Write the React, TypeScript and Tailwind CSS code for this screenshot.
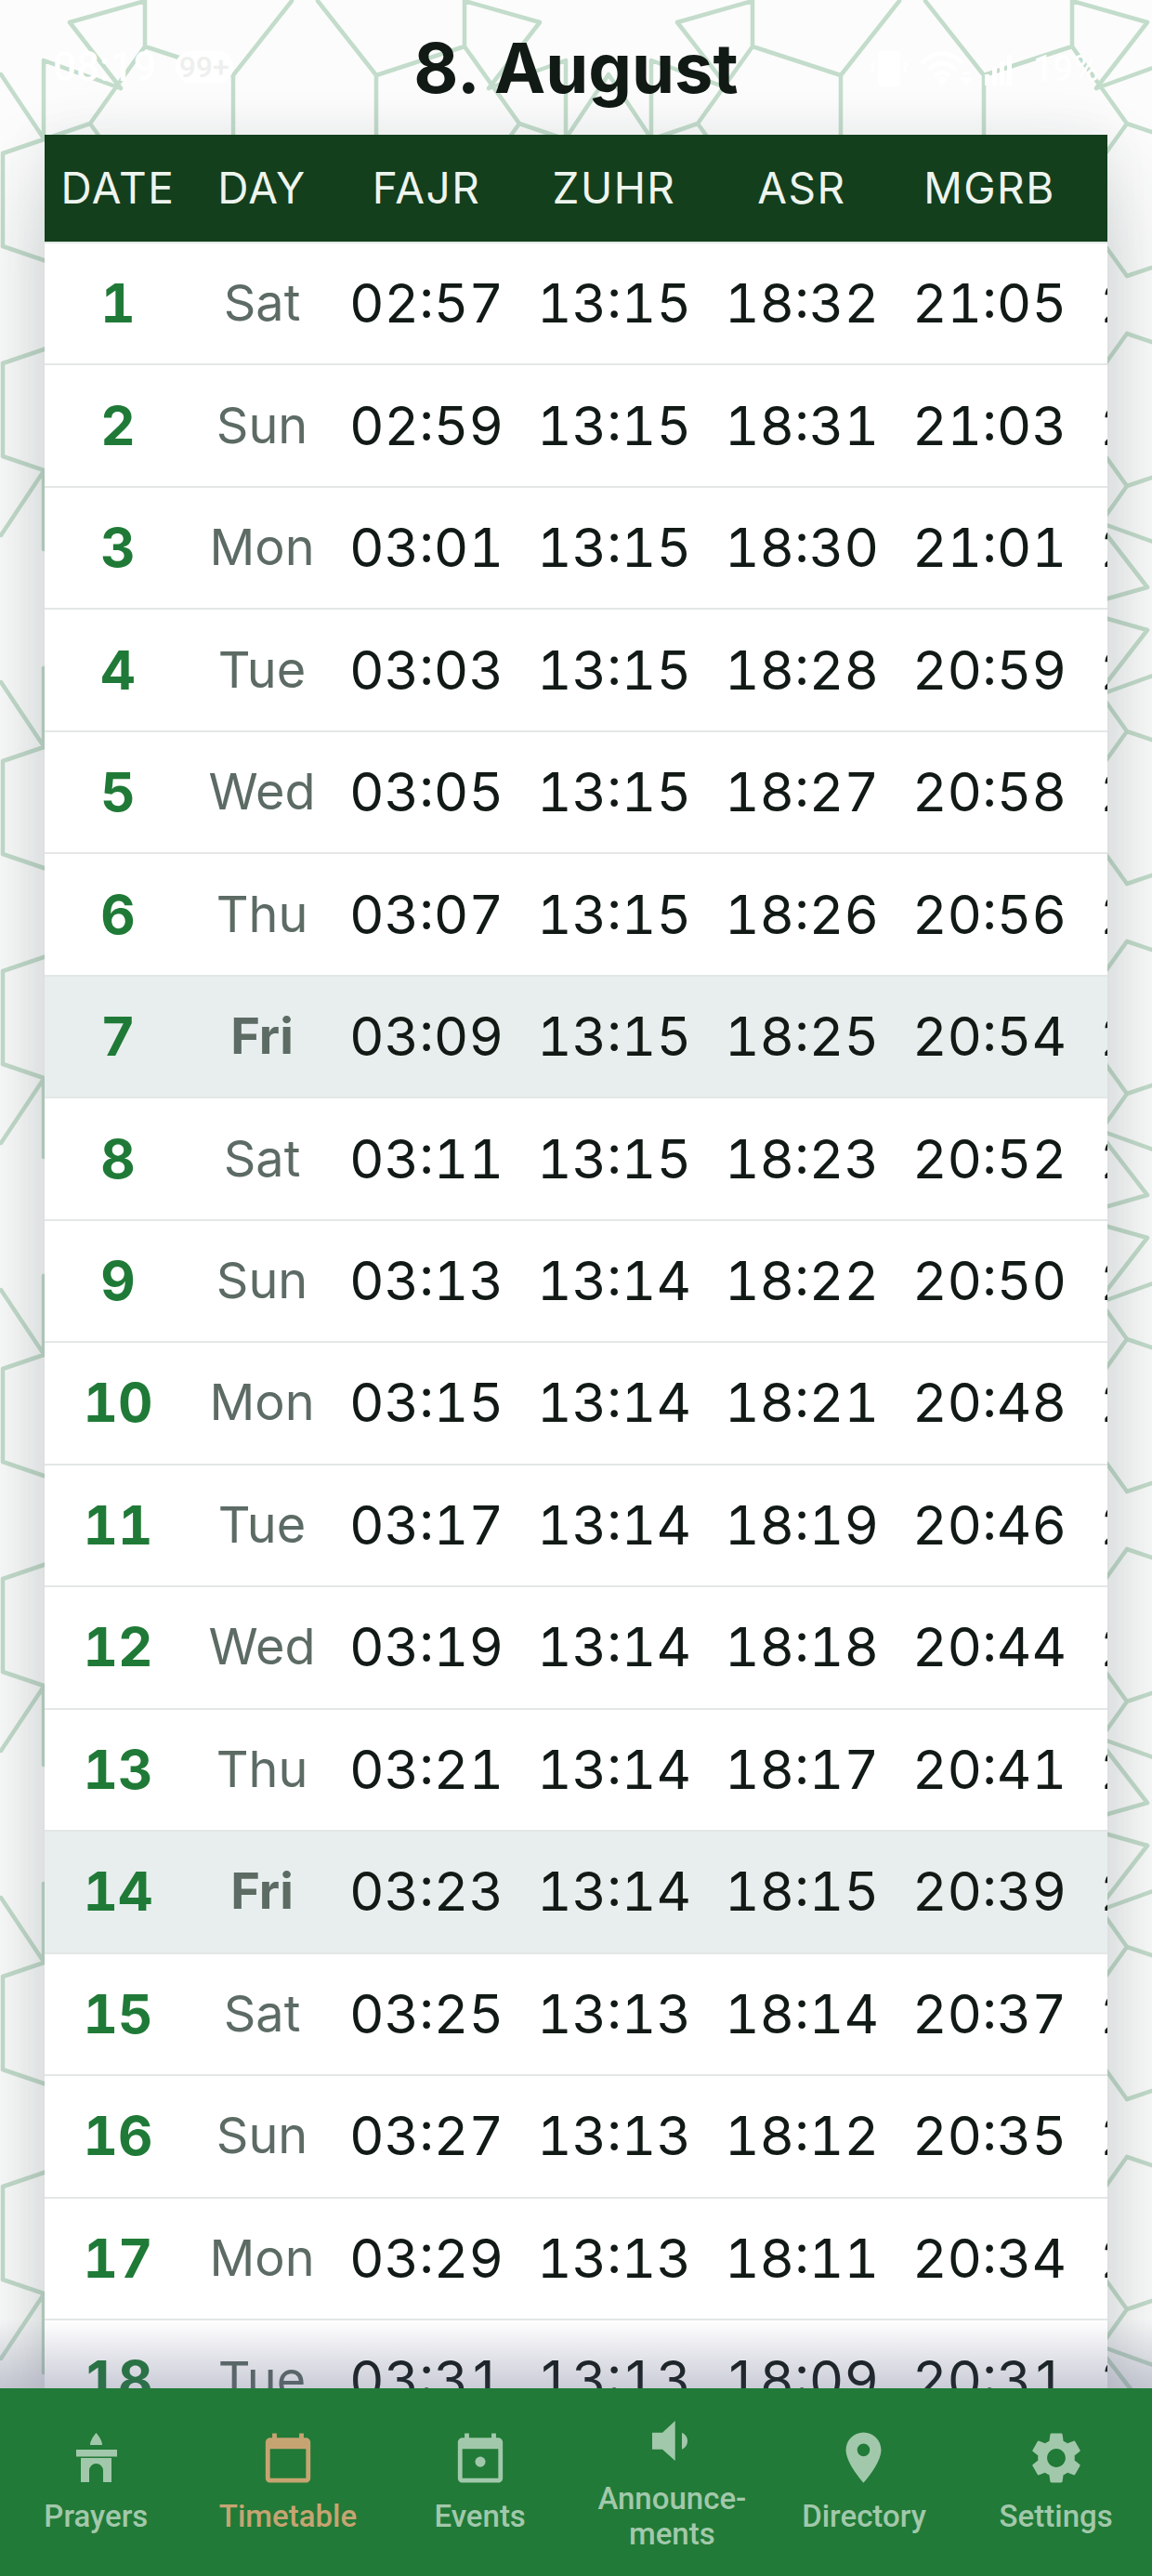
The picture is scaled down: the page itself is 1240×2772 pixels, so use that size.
import React from "react";

const rows: [number, string, string, string, string, string, string][] = [
  [1, "Sat", "02:57", "13:15", "18:32", "21:05", "22:48"],
  [2, "Sun", "02:59", "13:15", "18:31", "21:03", "22:46"],
  [3, "Mon", "03:01", "13:15", "18:30", "21:01", "22:44"],
  [4, "Tue", "03:03", "13:15", "18:28", "20:59", "22:42"],
  [5, "Wed", "03:05", "13:15", "18:27", "20:58", "22:40"],
  [6, "Thu", "03:07", "13:15", "18:26", "20:56", "22:38"],
  [7, "Fri", "03:09", "13:15", "18:25", "20:54", "22:36"],
  [8, "Sat", "03:11", "13:15", "18:23", "20:52", "22:34"],
  [9, "Sun", "03:13", "13:14", "18:22", "20:50", "22:32"],
  [10, "Mon", "03:15", "13:14", "18:21", "20:48", "22:30"],
  [11, "Tue", "03:17", "13:14", "18:19", "20:46", "22:28"],
  [12, "Wed", "03:19", "13:14", "18:18", "20:44", "22:26"],
  [13, "Thu", "03:21", "13:14", "18:17", "20:41", "22:24"],
  [14, "Fri", "03:23", "13:14", "18:15", "20:39", "22:22"],
  [15, "Sat", "03:25", "13:13", "18:14", "20:37", "22:20"],
  [16, "Sun", "03:27", "13:13", "18:12", "20:35", "22:18"],
  [17, "Mon", "03:29", "13:13", "18:11", "20:34", "22:16"],
  [18, "Tue", "03:31", "13:13", "18:09", "20:31", "22:14"],
];

// One quadrant of the geometric wallpaper; mirrored and repeated below.
const quadrant: number[][] = [
  [156, 1, 156, 50],
  [156, 50, 251, 81],
  [251, 81, 251, 170],
  [251, 81, 314, 1],
  [75, 24, 156, 1],
  [75, 24, 130, 95],
  [47, 65, 130, 95],
  [47, 65, 47, 149],
  [1, 80, 47, 149],
  [156, 50, 97, 133],
  [97, 133, 3, 165],
  [97, 133, 125, 172],
  [3, 165, 3, 265],
  [3, 265, 97, 297],
  [97, 297, 125, 258],
];

function wallpaperPath() {
  const out: string[] = [];
  for (let tx = 0; tx < 3; tx++) {
    for (let ty = 0; ty < 5; ty++) {
      for (const mx of [0, 1]) {
        for (const my of [0, 1]) {
          for (const [a, b, c, d] of quadrant) {
            const fx = (v: number) => (mx ? 656 - v : v) + tx * 654;
            const fy = (v: number) => (my ? 656 - v : v) + ty * 654;
            out.push(`M${fx(a)} ${fy(b)}L${fx(c)} ${fy(d)}`);
          }
        }
      }
    }
  }
  return out.join("");
}

const INACTIVE = "#a2c8ab";
const ACTIVE = "#c6a472";

const CAL =
  "M20 3h-1V1h-2v2H7V1H5v2H4c-1.1 0-2 .9-2 2v16c0 1.1.9 2 2 2h16c1.1 0 2-.9 2-2V5c0-1.1-.9-2-2-2zm0 18H4V8h16v13z";

function PrayersIcon() {
  return (
    <svg width="58" height="58" viewBox="0 0 58 58" fill={INACTIVE}>
      <path d="M23 15c0-4 3-9 6.500-13 3.500 4 6.500 9 6.500 13z" />
      <rect x="8" y="20" width="44" height="7.500" />
      <path fillRule="evenodd" d="M13 29h33v26h-9V42.500a7.500 7.500 0 0 0-15 0V55h-9z" />
    </svg>
  );
}

function CalendarIcon({ color }: { color: string }) {
  return (
    <svg width="58" height="58" viewBox="0 0 24 24" fill={color}>
      <path d={CAL} />
    </svg>
  );
}

function EventIcon() {
  return (
    <svg width="58" height="58" viewBox="0 0 24 24" fill={INACTIVE}>
      <path d={CAL} />
      <circle cx="12" cy="13.700" r="2.300" />
    </svg>
  );
}

function SpeakerIcon() {
  return (
    <svg width="58" height="58" viewBox="0 0 58 58" fill={INACTIVE}>
      <path d="M8 20.700h11L32.700 8v43L19 38.700H8z" />
      <path d="M40 20.700c3.500 1.500 6 5 6 9s-2.500 7.500-6 9z" />
    </svg>
  );
}

function PinIcon() {
  return (
    <svg width="65" height="65" viewBox="0 0 24 24" fill={INACTIVE} className="shrink-0">
      <path d="M12 2C8.130 2 5 5.130 5 9c0 5.250 7 13 7 13s7-7.750 7-13c0-3.870-3.130-7-7-7zm0 9.500a2.500 2.500 0 0 1 0-5 2.500 2.500 0 0 1 0 5z" />
    </svg>
  );
}

function GearIcon() {
  return (
    <svg width="66" height="66" viewBox="0 0 24 24" fill={INACTIVE} className="shrink-0">
      <path d="M19.140 12.940c.04-.3.06-.61.06-.94 0-.32-.02-.64-.07-.94l2.030-1.580c.18-.14.23-.41.12-.61l-1.920-3.320c-.12-.22-.37-.29-.59-.22l-2.390.96c-.5-.38-1.030-.7-1.620-.94L14.400 2.810c-.04-.24-.24-.41-.48-.41h-3.840c-.24 0-.43.17-.47.41L9.250 5.350c-.59.24-1.130.57-1.620.94l-2.390-.96c-.22-.08-.47 0-.59.22L2.740 8.870c-.12.21-.08.47.12.61l2.030 1.580c-.05.3-.09.63-.09.94s.02.64.07.94l-2.030 1.580c-.18.14-.23.41-.12.61l1.920 3.320c.12.22.37.29.59.22l2.390-.96c.5.38 1.030.7 1.620.94l.36 2.540c.05.24.24.41.48.41h3.840c.24 0 .44-.17.47-.41l.36-2.540c.59-.24 1.130-.56 1.620-.94l2.390.96c.22.08.47 0 .59-.22l1.920-3.320c.12-.22.07-.47-.12-.61l-2.010-1.580zM12 15.600c-1.980 0-3.600-1.620-3.600-3.600s1.620-3.600 3.600-3.600 3.600 1.620 3.600 3.600-1.620 3.600-3.600 3.600z" />
    </svg>
  );
}

const navItems: { icon: React.ReactNode; label: string[]; active?: boolean }[] = [
  { icon: <PrayersIcon />, label: ["Prayers"] },
  { icon: <CalendarIcon color={ACTIVE} />, label: ["Timetable"], active: true },
  { icon: <EventIcon />, label: ["Events"] },
  { icon: <SpeakerIcon />, label: ["Announce-", "ments"] },
  { icon: <PinIcon />, label: ["Directory"] },
  { icon: <GearIcon />, label: ["Settings"] },
];

function StatusBar() {
  return (
    <div className="absolute left-0 top-0 z-10 h-[145px] w-full text-white">
      <div className="absolute left-[57px] top-[46px] flex items-center gap-[20px] font-['Roboto',sans-serif] text-[44px] font-medium leading-[52px]">
        <span>08:19</span>
        <span className="rounded-[16px] bg-white px-[4px] text-[32px] leading-[34px] text-[#eef0ee]">99+</span>
      </div>
      <div className="absolute left-[936px] top-[54px] flex h-[40px] items-center">
        <svg width="42" height="40" viewBox="0 0 42 40" fill="none" className="mr-[12px]">
          <rect x="9" y="1" width="24" height="38" rx="4" fill="#fff" />
          <path d="M5 12l-3 4 3 4-3 4M37 12l3 4-3 4 3 4" stroke="#fff" strokeWidth="2.500" />
        </svg>
        <svg width="56" height="38" viewBox="0 0 56 38" fill="none" className="mr-[14px]">
          <path d="M2 13C16-1 32-1 46 13M9 20c10-9 20-9 30 0M16 27c5-5 11-5 16 0" stroke="#fff" strokeWidth="4.500" />
          <path d="M24 37l-6-7c4-3 8-3 12 0z" fill="#fff" />
          <path d="M46 24h8M50 34l-4-4h8z" stroke="#fff" strokeWidth="3" />
        </svg>
        <svg width="30" height="36" viewBox="0 0 30 36" fill="#fff" className="mr-[22px]">
          <rect x="0" y="24" width="5" height="12" />
          <rect x="8" y="17" width="5" height="19" />
          <rect x="16" y="10" width="5" height="26" />
          <rect x="24" y="3" width="5" height="33" />
        </svg>
        <span className="font-['Roboto',sans-serif] text-[38px] font-medium leading-[40px]">19%</span>
      </div>
    </div>
  );
}

export default function App() {
  return (
    <div className="relative flex h-[2772px] w-[1240px] flex-col overflow-hidden bg-[#fbfcfb] font-['Inter',sans-serif] text-[#121a15]">
      <svg className="pointer-events-none absolute left-0 top-0" width="1240" height="2772" fill="none" aria-hidden="true">
        <path d={wallpaperPath()} stroke="#c3dccb" strokeWidth="4.500" strokeLinecap="round" />
      </svg>
      <StatusBar />

      <header className="relative flex h-[145px] shrink-0 items-center justify-center">
        <h1 className="text-[74px] font-bold leading-none">8. August</h1>
      </header>

      <main className="relative mx-[48px] min-h-0 flex-1 overflow-hidden bg-white shadow-[0_50px_90px_rgba(40,50,60,0.22),0_0_50px_rgba(40,50,60,0.06)]">
        <div className="grid h-[115px] w-[1318px] grid-cols-[158px_152px_202px_202px_202px_202px_202px] items-center bg-[#133f1d] pb-[2px] text-center text-[46px] font-normal leading-none tracking-[1.500px] text-[#eef4ee]">
          <span>DATE</span>
          <span>DAY</span>
          <span>FAJR</span>
          <span>ZUHR</span>
          <span>ASR</span>
          <span>MGRB</span>
          <span>ISHA</span>
        </div>
        <div className="h-[2px] w-full bg-[#e3e7e6]" />
        {rows.map((r) => {
          const fri = r[1] === "Fri";
          return (
            <div
              key={r[0]}
              className={`grid h-[131.470px] w-[1318px] grid-cols-[158px_152px_202px_202px_202px_202px_202px] items-center border-b-2 border-[#e3e7e6] pb-[1px] text-center tabular-nums ${fri ? "bg-[#e8eeee]" : "bg-white"}`}
            >
              <span className="text-[58px] font-bold leading-none text-[#207a37]">{r[0]}</span>
              <span className={`text-[54px] leading-none text-[#5c6b63] ${fri ? "font-bold" : "font-normal"}`}>{r[1]}</span>
              {r.slice(2).map((t, i) => (
                <span key={i} className="text-[58px] font-normal leading-none">
                  {t}
                </span>
              ))}
            </div>
          );
        })}
      </main>

      <nav className="relative grid h-[202px] shrink-0 grid-cols-6 items-center bg-[#217a37] font-['Roboto',sans-serif] text-[33px] font-medium leading-[38px]">
        <div className="pointer-events-none absolute bottom-full left-0 h-[74px] w-full bg-gradient-to-b from-transparent to-[#50557a]/30" />
        {navItems.map((item) => (
          <div
            key={item.label[0]}
            className={`flex flex-col items-center text-center ${item.active ? "text-[#c6a472]" : "text-[#a2c8ab]"}`}
          >
            <div className="flex h-[58px] w-[58px] items-center justify-center overflow-visible">{item.icon}</div>
            <div className="mt-[15px]">
              {item.label.map((l) => (
                <div key={l}>{l}</div>
              ))}
            </div>
          </div>
        ))}
      </nav>
    </div>
  );
}
